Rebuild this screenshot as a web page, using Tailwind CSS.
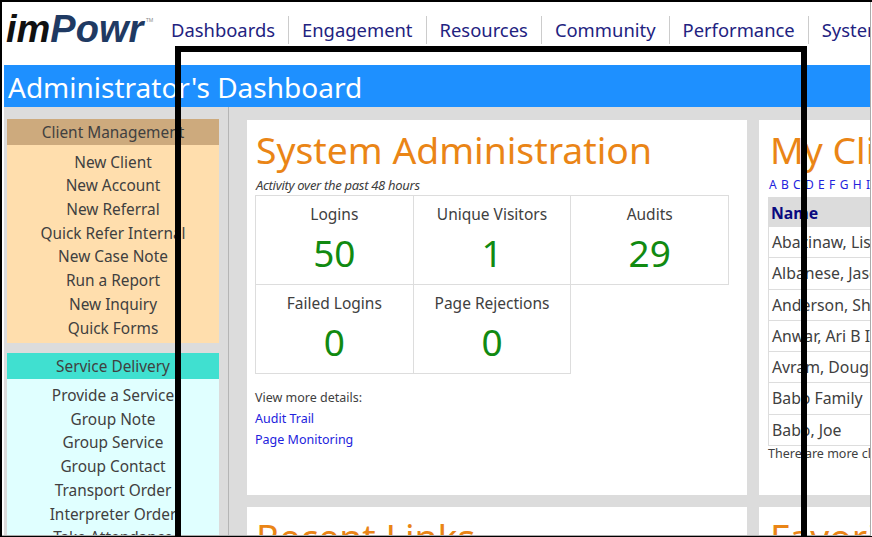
<!DOCTYPE html>
<html><head><meta charset="utf-8"><script src="https://cdn.jsdelivr.net/npm/@tailwindcss/browser@4"></script></head>
<body class="m-0">
<div class="relative w-[872px] h-[537px] overflow-hidden bg-white border-l-2 border-t-2 border-b border-black font-['Noto_Sans','Open_Sans',sans-serif] text-[#404040]">
 <div class="w-[869px] h-[534px] border-r border-b border-[#aaa] overflow-hidden">
  <div class="flex items-center h-[63px] pl-[4px] overflow-hidden">
    <div class="w-[165px] shrink-0 relative h-[63px]">
      <span class="absolute left-[0px] top-[5px] font-['Liberation_Sans',sans-serif] italic font-bold text-[38px] leading-[45px] text-[#111]">im<span class="text-[#1f3a63]">Powr</span></span>
      <span class="absolute left-[140px] top-[15px] text-[5px] leading-[6px] text-[#888]">TM</span>
    </div>
    <nav class="flex items-center text-[18.4px] text-[#22227f] whitespace-nowrap leading-[28px] -mt-[8px]">
      <span class="pr-[13px] border-r border-[#ccc]">Dashboards</span>
      <span class="px-[13px] border-r border-[#ccc]">Engagement</span>
      <span class="px-[13px] border-r border-[#ccc]">Resources</span>
      <span class="px-[13px] border-r border-[#ccc]">Community</span>
      <span class="px-[13px] border-r border-[#ccc]">Performance</span>
      <span class="px-[13px]">System</span>
    </nav>
  </div>
  <div class="ml-[2px] h-[42px] bg-[#1e90ff] text-white text-[28px] leading-[44px] pl-[4px] whitespace-nowrap">Administrator's Dashboard</div>
  <div class="ml-[2px] flex h-[428px] bg-[#dcdcdc]">
    <aside class="w-[225px] shrink-0 border-r border-[#b5b5b5] pl-[3px] pr-[9px] pt-[12px] text-center text-[15.4px] leading-[23.72px] overflow-hidden">
      <div class="bg-[#cdaa7d] h-[26px] leading-[27px]">Client Management</div>
      <div class="bg-[#ffdead] h-[198px] pt-[5.5px]">
        <div>New Client</div><div>New Account</div><div>New Referral</div><div>Quick Refer Internal</div><div>New Case Note</div><div>Run a Report</div><div>New Inquiry</div><div>Quick Forms</div>
      </div>
      <div class="bg-[#40e0d0] h-[26px] leading-[27px] mt-[10px]">Service Delivery</div>
      <div class="bg-[#e0ffff] pt-[5px] h-[300px]">
        <div>Provide a Service</div><div>Group Note</div><div>Group Service</div><div>Group Contact</div><div>Transport Order</div><div>Interpreter Order</div><div>Take Attendance</div>
      </div>
    </aside>
    <main class="flex-1 min-w-0 pl-[18px] pt-[13px] overflow-hidden">
      <div class="flex gap-[12px] h-[375px]">
        <section class="w-[500px] shrink-0 bg-white px-[8px] relative">
          <h1 class="text-[37.3px] leading-[60px] text-[#ea8516] whitespace-nowrap pl-[1px]">System Administration</h1>
          <p class="italic text-[13px] leading-[14px] -mt-[2px] pl-[1px] tracking-[-0.3px]">Activity over the past 48 hours</p>
          <div class="grid grid-cols-3 w-[474px] border-t border-l border-[#ddd] text-center mt-[3px]">
            <div class="h-[89px] border-r border-b border-[#ddd] pt-[8px] text-[15.5px] leading-[20px]"><div>Logins</div><div class="text-[37px] leading-[50px] mt-[4px] text-[#118a11]">50</div></div>
            <div class="h-[89px] border-r border-b border-[#ddd] pt-[8px] text-[15.5px] leading-[20px]"><div>Unique Visitors</div><div class="text-[37px] leading-[50px] mt-[4px] text-[#118a11]">1</div></div>
            <div class="h-[89px] border-r border-b border-[#ddd] pt-[8px] text-[15.5px] leading-[20px]"><div>Audits</div><div class="text-[37px] leading-[50px] mt-[4px] text-[#118a11]">29</div></div>
            <div class="h-[89px] border-r border-b border-[#ddd] pt-[8px] text-[15.5px] leading-[20px]"><div>Failed Logins</div><div class="text-[37px] leading-[50px] mt-[4px] text-[#118a11]">0</div></div>
            <div class="h-[89px] border-r border-b border-[#ddd] pt-[8px] text-[15.5px] leading-[20px]"><div>Page Rejections</div><div class="text-[37px] leading-[50px] mt-[4px] text-[#118a11]">0</div></div>
          </div>
          <div class="mt-[13px] text-[12.5px] leading-[21px]">
            <div>View more details:</div>
            <div class="text-[#2222dd]">Audit Trail</div>
            <div class="text-[#2222dd]">Page Monitoring</div>
          </div>
        </section>
        <section class="w-[200px] shrink-0 bg-white pl-[9px] whitespace-nowrap">
          <h1 class="text-[37.3px] leading-[60px] text-[#ea8516] pl-[2px]">My Clients</h1>
          <p class="text-[12px] leading-[14px] text-[#2222dd] tracking-[0.6px] -mt-[2px] pl-[1px]">A B C D E F G H I J K</p>
          <div class="mt-[5px] w-[200px] text-[15.8px]">
            <div class="bg-[#dcdcdc] h-[30px] leading-[32px] pl-[3px] font-bold text-[#0a0a80]">Name</div>
            <div class="h-[31.25px] leading-[31px] pl-[3px] border-l border-b border-[#ddd]">Abazinaw, Lisa</div>
            <div class="h-[31.25px] leading-[31px] pl-[3px] border-l border-b border-[#ddd]">Albanese, Jason</div>
            <div class="h-[31.25px] leading-[31px] pl-[3px] border-l border-b border-[#ddd]">Anderson, Sheila</div>
            <div class="h-[31.25px] leading-[31px] pl-[3px] border-l border-b border-[#ddd]">Anwar, Ari B II</div>
            <div class="h-[31.25px] leading-[31px] pl-[3px] border-l border-b border-[#ddd]">Avram, Douglas</div>
            <div class="h-[31.25px] leading-[31px] pl-[3px] border-l border-b border-[#ddd]">Babo Family</div>
            <div class="h-[31.25px] leading-[31px] pl-[3px] border-l border-b border-[#ddd]">Babo, Joe</div>
          </div>
          <p class="text-[12.5px] leading-[18px] -mt-[1px]">There are more clients</p>
        </section>
      </div>
      <div class="flex gap-[12px] mt-[12px] h-[60px]">
        <section class="w-[500px] shrink-0 bg-white px-[8px]"><h1 class="text-[37.3px] leading-[60px] text-[#ea8516] pl-[1px]">Recent Links</h1></section>
        <section class="w-[200px] shrink-0 bg-white pl-[11px]"><h1 class="text-[37.3px] leading-[60px] text-[#ea8516]">Favorites</h1></section>
      </div>
    </main>
  </div>
 </div>
 <div class="absolute left-[173px] top-[44px] w-[632px] h-[520px] border-[6px] border-black"></div>
</div>
</body></html>
